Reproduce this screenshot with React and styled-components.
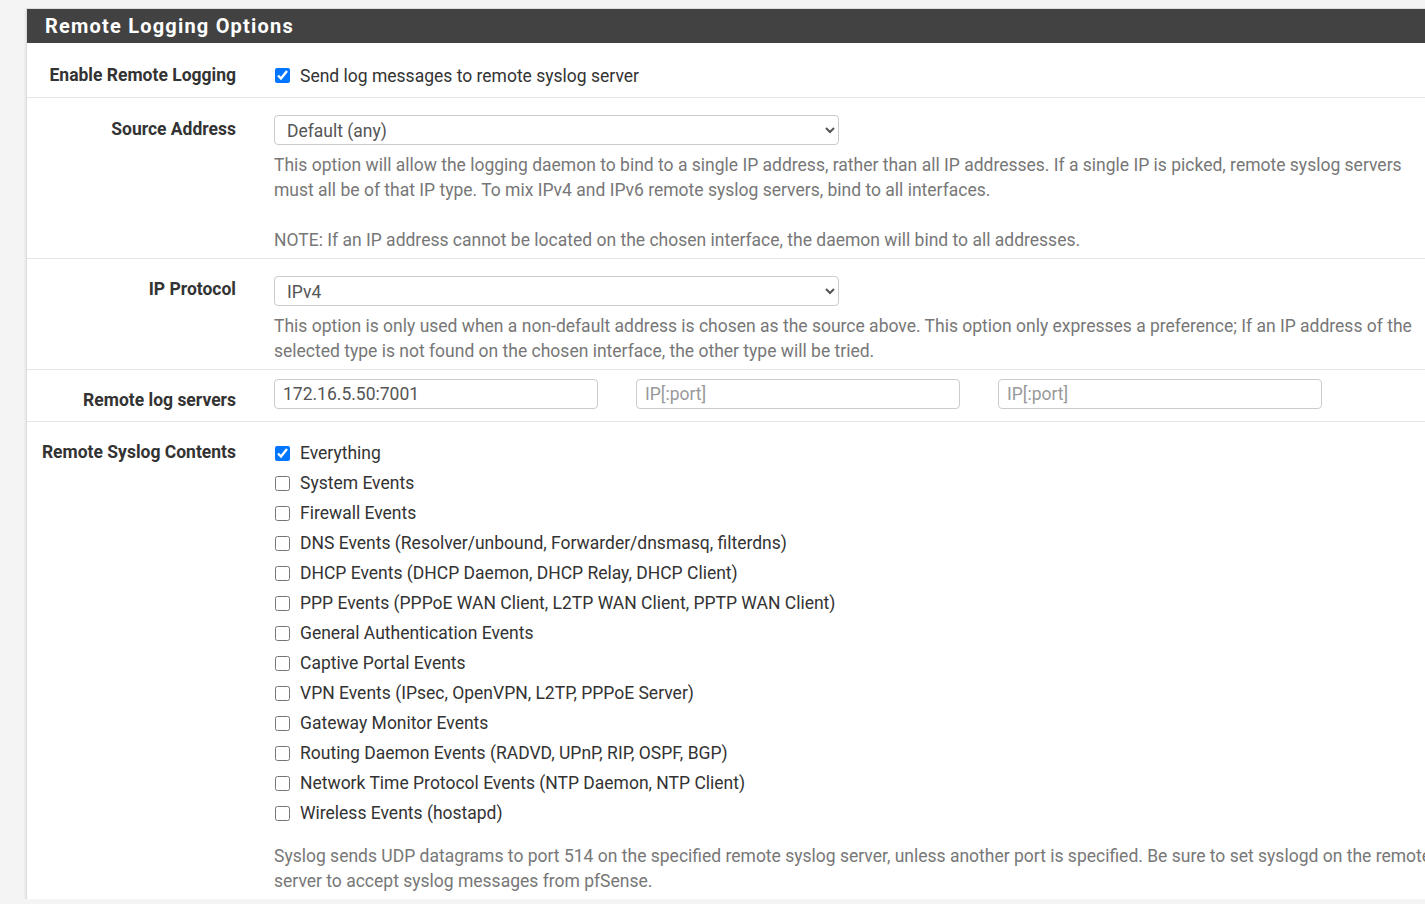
import React from "react";
import styled, { createGlobalStyle } from "styled-components";

const GlobalStyle = createGlobalStyle`
  html, body {
    margin: 0;
    padding: 0;
    background: #f4f4f4;
    overflow: hidden;
  }
  body {
    font-family: Roboto, "Liberation Sans", sans-serif;
    font-size: 17.5px;
    color: #333;
  }
  * { box-sizing: border-box; }
`;

const Page = styled.div`
  padding: 8px 0 0 26px;
  width: 1500px;
`;

const Panel = styled.section`
  width: 1460px;
  background: #fff;
  border-top: 1px solid #dcdcdc;
  border-left: 1px solid #dcdcdc;
  box-shadow: 0 2px 3px rgba(0, 0, 0, 0.12);
`;

const PanelHeading = styled.h2`
  margin: 0;
  height: 34px;
  padding-left: 18px;
  background: #424242;
  color: #fff;
  font-size: 20px;
  font-weight: 700;
  letter-spacing: 1.2px;
  line-height: 34px;
`;

const Row = styled.div`
  display: grid;
  grid-template-columns: 209px 1166px;
  column-gap: 38px;
  padding: ${(p) => p.$pad};
  border-bottom: ${(p) => (p.$last ? "none" : "1px solid #e4e4e4")};
`;

const Label = styled.div`
  text-align: right;
  font-weight: 700;
  font-size: 17.5px;
  line-height: 23px;
  color: #333;
  white-space: nowrap;
  padding-top: ${(p) => p.$offset || 0}px;
`;

const Content = styled.div`
  display: flex;
  flex-direction: column;
  align-items: flex-start;
`;

const CheckItem = styled.label`
  display: flex;
  align-items: center;
  height: ${(p) => p.$h}px;
  font-size: 17.5px;
  color: #333;
  white-space: nowrap;
  cursor: pointer;
`;

const Box = styled.input.attrs({ type: "checkbox" })`
  width: 15px;
  height: 15px;
  margin: 0 10px 0 1px;
`;

const Select = styled.select`
  width: 565px;
  height: 30px;
  padding: 1px 8px 0;
  border: 1px solid #cccccc;
  border-radius: 4px;
  background: #fff;
  font-family: Roboto, "Liberation Sans", sans-serif;
  font-size: 17.5px;
  color: #555;
`;

const Help = styled.p`
  margin: ${(p) => p.$mt}px 0 0;
  font-size: 17.5px;
  line-height: 25px;
  color: #777;
  white-space: pre-line;
`;

const InputGrid = styled.div`
  display: grid;
  grid-template-columns: repeat(3, 324px);
  column-gap: 38px;
  align-self: start;
`;

const TextInput = styled.input.attrs({ type: "text" })`
  height: 30px;
  padding: 0 8px;
  border: 1px solid #cccccc;
  border-radius: 4px;
  font-family: Roboto, "Liberation Sans", sans-serif;
  font-size: 17.5px;
  color: #555;
  &::placeholder {
    color: #999;
  }
`;

const contents = [
  ["Everything", true],
  ["System Events", false],
  ["Firewall Events", false],
  ["DNS Events (Resolver/unbound, Forwarder/dnsmasq, filterdns)", false],
  ["DHCP Events (DHCP Daemon, DHCP Relay, DHCP Client)", false],
  ["PPP Events (PPPoE WAN Client, L2TP WAN Client, PPTP WAN Client)", false],
  ["General Authentication Events", false],
  ["Captive Portal Events", false],
  ["VPN Events (IPsec, OpenVPN, L2TP, PPPoE Server)", false],
  ["Gateway Monitor Events", false],
  ["Routing Daemon Events (RADVD, UPnP, RIP, OSPF, BGP)", false],
  ["Network Time Protocol Events (NTP Daemon, NTP Client)", false],
  ["Wireless Events (hostapd)", false],
];

export default function App() {
  return (
    <>
      <GlobalStyle />
      <Page>
        <Panel>
          <PanelHeading>Remote Logging Options</PanelHeading>

          <Row $pad="21px 0 10px">
            <Label>Enable Remote Logging</Label>
            <Content>
              <CheckItem $h={23}>
                <Box defaultChecked />
                Send log messages to remote syslog server
              </CheckItem>
            </Content>
          </Row>

          <Row $pad="17px 0 5px">
            <Label $offset={3}>Source Address</Label>
            <Content>
              <Select defaultValue="any">
                <option value="any">Default (any)</option>
              </Select>
              <Help $mt={8}>
                {"This option will allow the logging daemon to bind to a single IP address, rather than all IP addresses. If a single IP is picked, remote syslog servers must all be of that IP type. To mix IPv4 and IPv6 remote syslog servers, bind to all interfaces.\n\nNOTE: If an IP address cannot be located on the chosen interface, the daemon will bind to all addresses."}
              </Help>
            </Content>
          </Row>

          <Row $pad="17px 0 5px">
            <Label $offset={2}>IP Protocol</Label>
            <Content>
              <Select defaultValue="ipv4">
                <option value="ipv4">IPv4</option>
              </Select>
              <Help $mt={8}>
                This option is only used when a non-default address is chosen as the source above. This option only expresses a preference; If an IP address of the selected type is not found on the chosen interface, the other type will be tried.
              </Help>
            </Content>
          </Row>

          <Row $pad="9px 0 9px">
            <Label $offset={10}>Remote log servers</Label>
            <InputGrid>
              <TextInput defaultValue="172.16.5.50:7001" />
              <TextInput placeholder="IP[:port]" />
              <TextInput placeholder="IP[:port]" />
            </InputGrid>
          </Row>

          <Row $pad="16px 0 5px" $last>
            <Label $offset={3}>Remote Syslog Contents</Label>
            <Content>
              {contents.map(([text, checked]) => (
                <CheckItem key={text} $h={30}>
                  <Box defaultChecked={checked} />
                  {text}
                </CheckItem>
              ))}
              <Help $mt={16}>
                Syslog sends UDP datagrams to port 514 on the specified remote syslog server, unless another port is specified. Be sure to set syslogd on the remote server to accept syslog messages from pfSense.
              </Help>
            </Content>
          </Row>
        </Panel>
      </Page>
    </>
  );
}
